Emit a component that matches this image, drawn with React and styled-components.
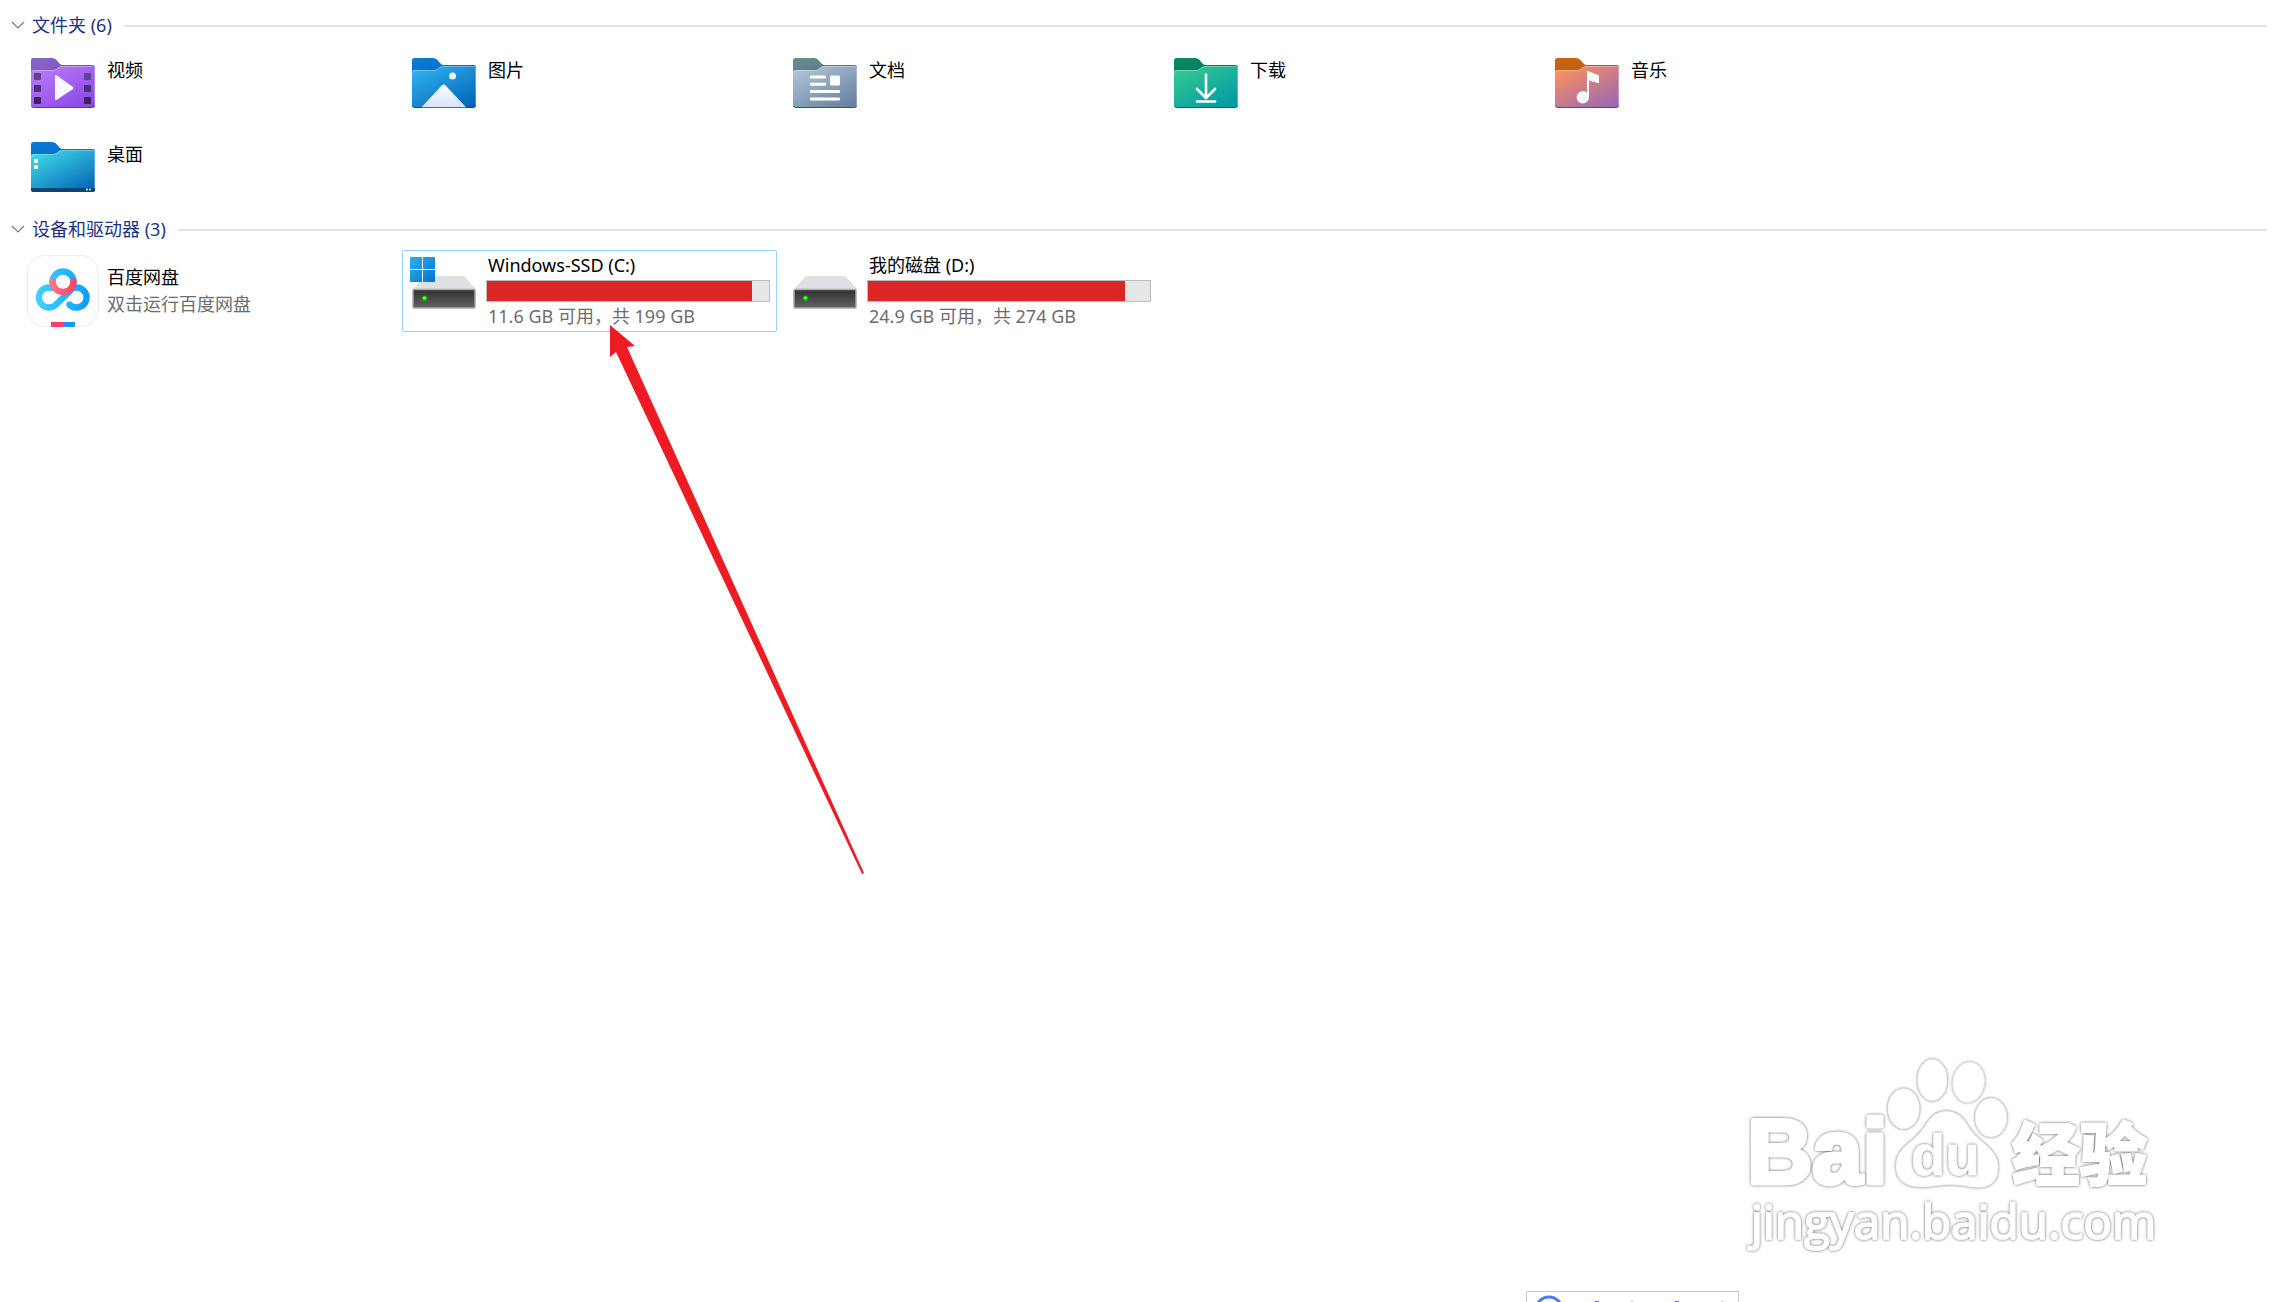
import React, { useState } from "react";
import styled, { createGlobalStyle } from "styled-components";

const folders = [
  { id: "videos", name: "视频", tab: ["#8a63c9", "#7a55b0"], body: ["#b97cf5", "#8a46e6"], edge: "#5f36a3" },
  { id: "pictures", name: "图片", tab: ["#0a7bd8", "#0569c4"], body: ["#2fb4ee", "#0463b8"], edge: "#064a8c" },
  { id: "documents", name: "文档", tab: ["#6d8b98", "#566f7c"], body: ["#b4c5d9", "#647f9f"], edge: "#3d5068" },
  { id: "downloads", name: "下载", tab: ["#098a66", "#0a7355"], body: ["#35cb90", "#0098a8"], edge: "#046a70" },
  { id: "music", name: "音乐", tab: ["#c9670f", "#b0571d"], body: ["#ff9257", "#9966b8"], edge: "#6b4165" },
  { id: "desktop", name: "桌面", tab: ["#0a7bd8", "#0569c4"], body: ["#3fdde6", "#0463b8"], edge: "#05355c" },
];

const drives = [
  { id: "c", name: "Windows-SSD (C:)", free: 11.6, total: 199, used: 94, system: true, selected: true },
  { id: "d", name: "我的磁盘 (D:)", free: 24.9, total: 274, used: 91 },
];

const folderGlyphs = {
  videos: (
    <>
      {[26, 38, 50].map((y, i) => (
        <g key={y} fill={["#5d4390", "#4a3180", "#3b235f"][i]}>
          <rect x="7" y={y} width="7" height="7" rx="1" />
          <rect x="57" y={y} width="7" height="7" rx="1" />
        </g>
      ))}
      <path d="M28 29.500v22q0 2.200 1.800 1.200L46 42q1.200-1 0-2L29.800 28.600q-1.800-1.200-1.800.9z" fill="#faf7ff" />
    </>
  ),
  pictures: (
    <>
      <circle cx="44.500" cy="29" r="3.500" fill="#f0f4f8" />
      <path d="M13.500 60.200L33.800 38.400q1.900-1.900 3.800 0L58 60.200z" fill="url(#peak)" />
    </>
  ),
  documents: (
    <g fill="#fff">
      <rect x="21" y="28.500" width="16" height="3" rx="1" />
      <rect x="21" y="35.800" width="16" height="3" rx="1" />
      <rect x="21" y="43" width="30" height="3" rx="1" />
      <rect x="21" y="50.500" width="30" height="3" rx="1" />
      <rect x="41" y="28.500" width="10" height="10" rx="1.500" />
    </g>
  ),
  downloads: (
    <path
      d="M36 27.500v23M27 42l9 9 9-9M27 54.500h18"
      fill="none"
      stroke="#fff"
      strokeWidth="2.600"
      strokeLinecap="round"
      strokeLinejoin="round"
    />
  ),
  music: (
    <path
      d="M36 24.500q.3-.8 1.200-.6l10 4q.8.300.8 1.200v6.400q-.2 1-1.300.6L38 33.500V50a6.200 6.200 0 1 1-2-4.300z"
      fill="#fafafa"
    />
  ),
  desktop: (
    <>
      <rect x="7" y="28" width="4" height="4" rx="1" fill="#fff" />
      <rect x="7" y="34" width="4" height="4" rx="1" fill="#fff" />
      <path d="M4 57h64v2q0 2-2 2H6q-2 0-2-2z" fill="#0b4670" />
      <path d="M59 58.500h2M62 58.500h2" stroke="#fff" strokeWidth="1.500" />
    </>
  ),
};

const FolderIcon = ({ id, tab, body, edge }) => (
  <svg width="72" height="72" viewBox="0 1 72 72" aria-hidden="true">
    <defs>
      <linearGradient id={`${id}-tab`} x2="1" y2="1">
        <stop stopColor={tab[0]} />
        <stop offset="1" stopColor={tab[1]} />
      </linearGradient>
      <linearGradient id={`${id}-body`} x1=".1" y1="0" x2=".9" y2="1">
        <stop stopColor={body[0]} />
        <stop offset="1" stopColor={body[1]} />
      </linearGradient>
      <linearGradient id="peak" x2="0" y2="1">
        <stop stopColor="#fff" />
        <stop offset="1" stopColor="#d5e2fb" />
      </linearGradient>
    </defs>
    <path
      d="M4 30V13.500q0-2.500 2.500-2.500H25q2.500 0 4 1.500l3.500 4q1.500 1.500 3.500 1.500h29.500q2.500 0 2.500 2.500V30z"
      fill={`url(#${id}-tab)`}
    />
    <path d="M4 25q0-2 2.500-2H26q2 0 4-1.500l2-1.500q1.500-1 3.500-1h30q2.500 0 2.500 2.500v36q0 3-2.500 3h-59Q4 60.500 4 58z" fill={`url(#${id}-body)`} />
    <path d="M4.500 26q0-2.500 2-2.500H26q2 0 4-1.500l2-1.500q1.500-1 3.500-1h30q2 0 2 2V58" fill="none" stroke="#fff" strokeOpacity=".3" />
    <path d="M4.500 59q.5 1.500 2 1.500h59q1.500 0 2-1.500" fill="none" stroke={edge} />
    {folderGlyphs[id]}
  </svg>
);

const DriveIcon = ({ system }) => (
  <svg width="72" height="72" viewBox="0 0 72 72" aria-hidden="true">
    <defs>
      <linearGradient id="drive-front" x2="0" y2="1">
        <stop stopColor="#303030" />
        <stop offset="1" stopColor="#636363" />
      </linearGradient>
      <linearGradient id="win" x2="1" y2="1">
        <stop stopColor="#2bb1ee" />
        <stop offset="1" stopColor="#0274cf" />
      </linearGradient>
    </defs>
    <path d="M17 21h39L68 34H5z" fill="#dfe0e4" />
    <rect x="5" y="34.500" width="62" height="18.500" rx="1" fill="url(#drive-front)" stroke="#a9a9a9" strokeWidth="1.500" />
    <circle cx="16.500" cy="43.500" r="3" fill="#0d9c12" />
    <circle cx="16.500" cy="43" r="1.800" fill="#4dff4d" />
    {system && <path d="M2 2h12v12H2zM15 2h12v12H15zM2 15h12v12H2zM15 15h12v12H15z" fill="url(#win)" />}
  </svg>
);

const NetdiskIcon = () => (
  <svg width="72" height="72" viewBox="0 0 72 72" fill="none" aria-hidden="true">
    <defs>
      <linearGradient id="cloud" gradientUnits="userSpaceOnUse" x1="9" y1="40" x2="63" y2="40">
        <stop stopColor="#42d3ff" />
        <stop offset="1" stopColor="#0a9cff" />
      </linearGradient>
      <linearGradient id="arc" gradientUnits="userSpaceOnUse" x1="22" y1="28" x2="50" y2="28">
        <stop stopColor="#ff7a88" />
        <stop offset="1" stopColor="#ff3e64" />
      </linearGradient>
    </defs>
    <rect x=".5" y=".5" width="71" height="71" rx="17" fill="#fff" stroke="#ececec" />
    <g stroke="url(#cloud)" strokeWidth="6.400" strokeLinecap="round">
      <path d="M44 35L29 49.500A10 10 0 1 1 25 33" />
      <path d="M47 32.800A10 10 0 1 1 42.500 49.600" />
      <path d="M25.500 27a10.500 10.500 0 0 1 21 0" />
    </g>
    <path d="M25.500 26.500a10.500 10.500 0 0 0 21 0" stroke="url(#arc)" strokeWidth="6.400" strokeLinecap="round" />
    <path d="M24 67h12v5H24z" fill="#ff3e64" />
    <path d="M36 67h12v5H36z" fill="#1e90ff" />
  </svg>
);

const Watermark = () => (
  <WatermarkArt viewBox="0 0 1350 690" role="img" aria-label="Baidu 经验">
    <defs>
      <filter id="glow">
        <feDropShadow dx="0" dy="0" stdDeviation="5" floodColor="#555" />
      </filter>
    </defs>
    <g fill="#fff" stroke="#fff" strokeLinejoin="round">
      <text x="52" y="430" fontSize="270" fontWeight="700" strokeWidth="14">Bai</text>
      <ellipse cx="521" cy="206" rx="47" ry="60" />
      <ellipse cx="607" cy="120" rx="44" ry="62" />
      <ellipse cx="716" cy="127" rx="47" ry="60" transform="rotate(8 716 127)" />
      <ellipse cx="783" cy="233" rx="47" ry="58" />
      <path d="M650 214q38 0 62 42 18 30 50 54 42 34 42 70 0 62-60 62-22 0-46-6-46-6-90 2-24 4-44 2-66-4-66-64 0-36 38-66 34-26 52-56 24-40 62-40z" />
      <text x="542" y="405" fontSize="170" fontWeight="700">du</text>
      <text x="846" y="419" fontSize="203" fontWeight="900" strokeWidth="6">经验</text>
      <text x="62" y="598" fontSize="143" strokeWidth="5" className="site">jingyan.baidu.com</text>
    </g>
  </WatermarkArt>
);

const Section = ({ title, count, inset, children }) => {
  const [open, setOpen] = useState(true);

  return (
    <section>
      <GroupHeader type="button" aria-expanded={open} onClick={() => setOpen(!open)}>
        <svg width="14" height="8" viewBox="0 0 14 8" aria-hidden="true">
          <path d="M1 1l6 6 6-6" fill="none" stroke="#777" strokeWidth="1.200" />
        </svg>
        <span>
          {title} ({count})
        </span>
        <Rule />
      </GroupHeader>
      {open && <Tiles $inset={inset}>{children}</Tiles>}
    </section>
  );
};

const App = () => {
  return (
    <>
      <GlobalStyle />
      <Page>
        <Section title="文件夹" count={folders.length} inset={2}>
          {folders.map((folder) => (
            <Tile key={folder.id}>
              <FolderIcon {...folder} />
              <Details>
                <Name>{folder.name}</Name>
              </Details>
            </Tile>
          ))}
        </Section>
        <Section title="设备和驱动器" count={drives.length + 1} inset={5}>
          <Tile>
            <NetdiskIcon />
            <Details>
              <Name>百度网盘</Name>
              <Note>双击运行百度网盘</Note>
            </Details>
          </Tile>
          {drives.map((drive) => (
            <Tile key={drive.id} $selected={drive.selected}>
              <DriveIcon system={drive.system} />
              <Details>
                <Name>{drive.name}</Name>
                <Usage role="meter" aria-label={drive.name} aria-valuenow={drive.used}>
                  <div style={{ width: `${drive.used}%` }} />
                </Usage>
                <Note>
                  {drive.free} GB 可用，共 {drive.total} GB
                </Note>
              </Details>
              {drive.selected && (
                <Pointer viewBox="0 0 256 552" aria-hidden="true">
                  <path d="M2 2L27 23l-8 1L256 550l-2 1L8 29l-6 5z" fill="#ed1c24" />
                </Pointer>
              )}
            </Tile>
          ))}
        </Section>
        <Watermark />
        <InputBar>
          <svg width="211" height="10" viewBox="0 0 211 10" aria-hidden="true">
            <circle cx="22" cy="18" r="13" fill="none" stroke="#4e7bf5" strokeWidth="3" />
            <path d="M68 9.500h4M148 9.500h4" stroke="#4e7bf5" />
            <path d="M103 9.500h4M194 9.500h3" stroke="#d5d5d5" />
          </svg>
        </InputBar>
      </Page>
    </>
  );
};

const GlobalStyle = createGlobalStyle`
  body {
    margin: 0;
    background: #fff;
    font-family: "Noto Sans", "Noto Sans CJK SC", sans-serif;
    font-size: 18px;
  }
  * {
    box-sizing: border-box;
  }
`;

const Page = styled.main`
  position: relative;
  min-height: 100vh;
  padding-top: 9px;
  overflow: hidden;
  display: flex;
  flex-direction: column;
  gap: 4px;
`;

const GroupHeader = styled.button`
  width: 100%;
  height: 32px;
  padding: 0 11px;
  border: 0;
  background: none;
  display: flex;
  align-items: center;
  gap: 7px;
  font: inherit;
  line-height: 32px;
  color: #1e3287;
  cursor: pointer;
`;

const Rule = styled.i`
  flex: 1;
  height: 2px;
  margin: 2px 0 0 5px;
  background: #e3e3e3;
`;

const Tiles = styled.ul`
  list-style: none;
  margin: 0;
  padding: ${({ $inset }) => $inset}px 0 0 21px;
  display: grid;
  grid-template-columns: repeat(auto-fill, 375px);
  gap: 2px 6px;
`;

const Tile = styled.li`
  position: relative;
  height: 82px;
  padding: 0 6px 0 5px;
  display: flex;
  align-items: center;
  gap: 6px;
  border: 1px solid ${({ $selected }) => ($selected ? "#99d1ff" : "transparent")};
  border-radius: 2px;
`;

const Details = styled.div`
  flex: 1;
  min-height: 54px;
  line-height: 27px;
`;

const Name = styled.div`
  padding: 0 2px;
  color: #000;
`;

const Note = styled.div`
  padding: 0 2px;
  color: #6d6d6d;
`;

const Usage = styled.div`
  height: 22px;
  margin: 1px 0;
  border: 1px solid #bcbcbc;
  background: #e6e6e6;
  div {
    height: 100%;
    background: #da2626;
  }
`;

const Pointer = styled.svg`
  position: absolute;
  z-index: 1;
  left: 205px;
  top: 72px;
  width: 256px;
  height: 552px;
  pointer-events: none;
`;

const WatermarkArt = styled.svg`
  position: absolute;
  right: 98px;
  bottom: 32px;
  width: 450px;
  height: 230px;
  font-family: "Liberation Sans", "Noto Sans CJK SC", sans-serif;
  text,
  ellipse,
  path {
    filter: url(#glow);
  }
  .site {
    font-family: "Open Sans", sans-serif;
  }
`;

const InputBar = styled.div`
  position: absolute;
  right: 539px;
  bottom: 0;
  border: 1px solid #c8c8c8;
  border-bottom: 0;
  svg {
    display: block;
  }
`;

export default App;
